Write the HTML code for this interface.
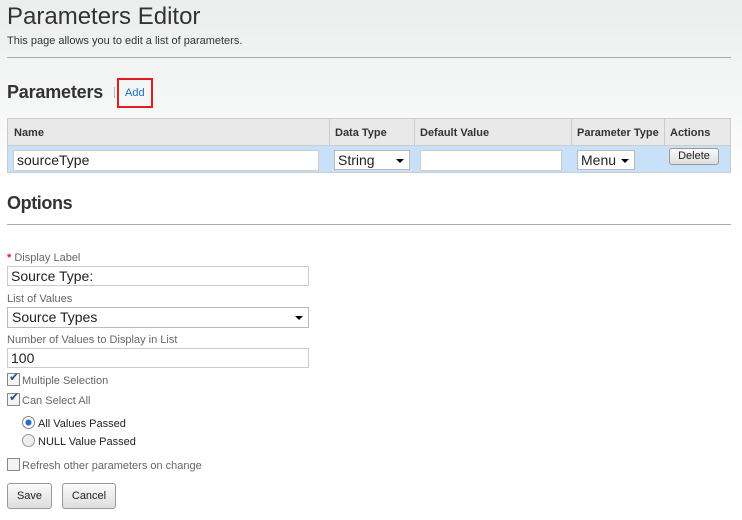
<!DOCTYPE html>
<html><head><style>
body{margin:0;width:742px;height:520px;position:relative;font-family:"Liberation Sans",Arial,sans-serif;background:linear-gradient(#eceeed 0px,#f7f8f8 120px,#fff 180px);overflow:hidden;color:#333}
.a{position:absolute;white-space:nowrap}
.inp{position:absolute;background:#fff;border:1px solid #ccc;box-sizing:border-box;font-size:14px;color:#222;padding-left:3px;line-height:18px}
.sel{position:absolute;background:#fff;border:1px solid #bbb;box-sizing:border-box;font-size:14px;color:#222;padding-left:3px;line-height:18px}
.arr{position:absolute;right:5px;top:8px;width:0;height:0;border-left:4px solid transparent;border-right:4px solid transparent;border-top:4px solid #000}
.lbl{font-size:11px;color:#666}
.cb{position:absolute;width:11px;height:11px;border:1px solid #888;background:#f4f4f4}
.btn{position:absolute;border:1px solid #999;border-radius:3px;background:linear-gradient(#fafafa,#ddd);font-size:12px;color:#222;text-align:center;box-sizing:border-box}
</style></head><body>
<div class="a" style="left:7px;top:3px;font-size:24px;color:#333">Parameters Editor</div>
<div class="a" style="left:7px;top:35px;font-size:11px;color:#333">This page allows you to edit a list of parameters.</div>
<div class="a" style="left:7px;top:57px;width:724px;height:1px;background:#aaa"></div>
<div class="a" style="left:7px;top:82px;font-size:18px;font-weight:bold;color:#333;letter-spacing:-0.2px">Parameters</div>
<div class="a" style="left:114px;top:87px;width:1px;height:11px;background:#bbb"></div>
<div class="a" style="left:117px;top:78px;width:36px;height:30px;border:2px solid #e31b23;box-sizing:border-box"></div>
<div class="a" style="left:125px;top:87px;font-size:11px;color:#1a6fc4">Add</div>
<div class="a" style="left:7px;top:118px;width:724px;height:55px;border:1px solid #ccc;box-sizing:border-box;background:#c8e0f8">
<div style="height:26px;background:#e9e9e9;border-bottom:1px solid #ccc;position:relative">
<div class="a" style="left:6px;top:8px;font-size:11px;font-weight:bold">Name</div>
<div class="a" style="left:321px;top:0;width:1px;height:26px;background:#ccc"></div>
<div class="a" style="left:327px;top:8px;font-size:11px;font-weight:bold">Data Type</div>
<div class="a" style="left:406px;top:0;width:1px;height:26px;background:#ccc"></div>
<div class="a" style="left:412px;top:8px;font-size:11px;font-weight:bold">Default Value</div>
<div class="a" style="left:563px;top:0;width:1px;height:26px;background:#ccc"></div>
<div class="a" style="left:569px;top:8px;font-size:11px;font-weight:bold">Parameter Type</div>
<div class="a" style="left:656px;top:0;width:1px;height:26px;background:#ccc"></div>
<div class="a" style="left:662px;top:8px;font-size:11px;font-weight:bold">Actions</div>
</div></div>
<div class="inp" style="left:13px;top:150px;width:306px;height:21px">sourceType</div>
<div class="sel" style="left:334px;top:150px;width:76px;height:20px">String<div class="arr"></div></div>
<div class="inp" style="left:420px;top:150px;width:142px;height:21px"></div>
<div class="sel" style="left:577px;top:150px;width:58px;height:20px">Menu<div class="arr"></div></div>
<div class="btn" style="left:669px;top:148px;width:50px;height:17px;line-height:15px;font-size:11px">Delete</div>
<div class="a" style="left:7px;top:193px;font-size:18px;font-weight:bold;color:#333;letter-spacing:-0.4px">Options</div>
<div class="a" style="left:7px;top:224px;width:724px;height:1px;background:#aaa"></div>
<div class="a lbl" style="left:7px;top:252px"><span style="color:#e31b23;font-weight:bold">*</span> Display Label</div>
<div class="inp" style="left:7px;top:266px;width:302px;height:20px">Source Type:</div>
<div class="a lbl" style="left:7px;top:293px">List of Values</div>
<div class="sel" style="left:7px;top:307px;width:302px;height:21px;padding-left:4px">Source Types<div class="arr"></div></div>
<div class="a lbl" style="left:7px;top:334px">Number of Values to Display in List</div>
<div class="inp" style="left:7px;top:348px;width:302px;height:20px">100</div>
<div class="cb" style="left:7px;top:373px"></div><div class="a" style="left:9px;top:370px;font-size:12px;color:#2a4d8a">✔</div>
<div class="a lbl" style="left:22px;top:375px">Multiple Selection</div>
<div class="cb" style="left:7px;top:393px"></div><div class="a" style="left:9px;top:390px;font-size:12px;color:#2a4d8a">✔</div>
<div class="a lbl" style="left:22px;top:395px">Can Select All</div>
<div class="a" style="left:22px;top:416px;width:11px;height:11px;border-radius:50%;border:1px solid #888;background:radial-gradient(#1a6fc4 2.5px,#fff 3.5px)"></div>
<div class="a" style="left:38px;top:418px;font-size:11px;color:#222">All Values Passed</div>
<div class="a" style="left:22px;top:434px;width:11px;height:11px;border-radius:50%;border:1px solid #999;background:#eee"></div>
<div class="a" style="left:38px;top:436px;font-size:11px;color:#222">NULL Value Passed</div>
<div class="cb" style="left:7px;top:458px"></div>
<div class="a lbl" style="left:22px;top:460px">Refresh other parameters on change</div>
<div class="btn" style="left:7px;top:483px;width:45px;height:26px;line-height:24px;font-size:11px">Save</div>
<div class="btn" style="left:62px;top:483px;width:54px;height:26px;line-height:24px;font-size:11px">Cancel</div>
</body></html>
